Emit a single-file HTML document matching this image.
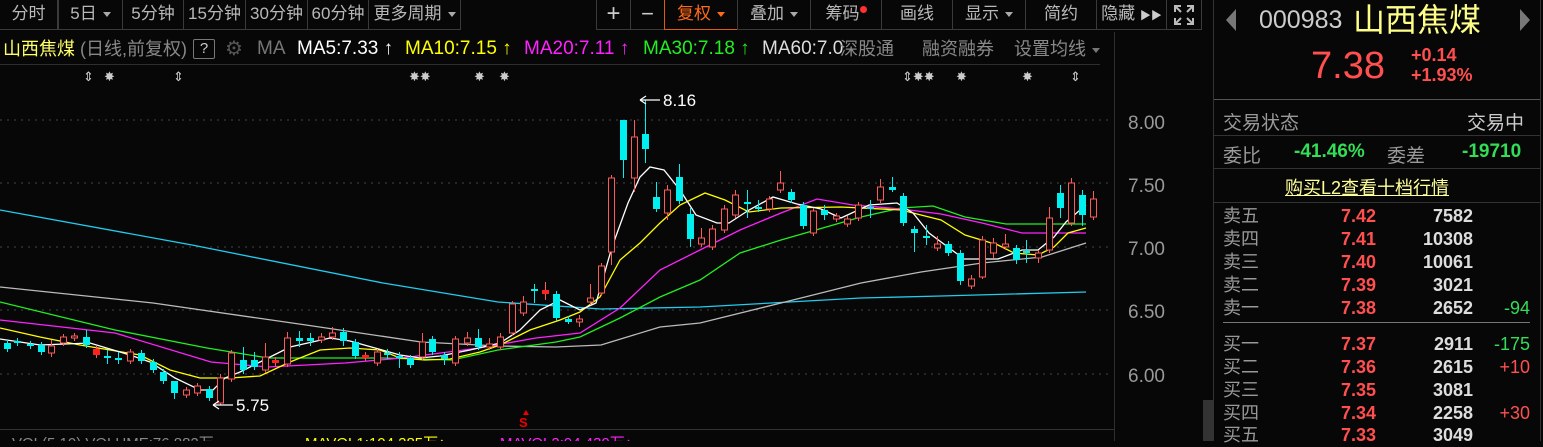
<!DOCTYPE html>
<html><head><meta charset="utf-8"><style>
*{margin:0;padding:0;box-sizing:border-box}
body{width:1543px;height:441px;background:#070707;overflow:hidden;position:relative;font-family:"Liberation Sans","Noto Sans CJK SC",sans-serif;color:#bbb}
.a{position:absolute;white-space:nowrap}
.btn{position:absolute;top:0;height:30px;border:1px solid #3a3a3a;border-top:none;font-size:17px;line-height:28px;text-align:center;color:#b8b8b8}
.car{display:inline-block;width:0;height:0;border-left:4px solid transparent;border-right:4px solid transparent;border-top:5px solid #aaa;vertical-align:middle;margin-left:6px}
.r{color:#ff4f4f}.g{color:#33dd55}
.row{position:absolute;left:1223px;width:307px;height:23px;font-size:18px;line-height:23px}
.row span{position:absolute;top:0}
.m{position:absolute;top:38px;font-size:18px;line-height:22px;white-space:nowrap}
</style></head><body>
<!-- toolbar -->
<div class="btn" style="left:-1px;width:59px">分时</div>
<div class="btn" style="left:58px;width:65px">5日<span class="car"></span></div>
<div class="btn" style="left:122px;width:62px">5分钟</div>
<div class="btn" style="left:183px;width:63px">15分钟</div>
<div class="btn" style="left:245px;width:63px">30分钟</div>
<div class="btn" style="left:307px;width:62px">60分钟</div>
<div class="btn" style="left:368px;width:93px">更多周期<span class="car"></span></div>
<div class="btn" style="left:596px;width:35px;font-size:24px;color:#ccc">+</div>
<div class="btn" style="left:630px;width:35px;font-size:22px;color:#ccc">−</div>
<div class="btn" style="left:664px;width:74px;border:1px solid #e05a10;border-top:none;color:#ff6a1a">复权<span class="car" style="border-top-color:#ff6a1a"></span></div>
<div class="btn" style="left:737px;width:74px">叠加<span class="car"></span></div>
<div class="btn" style="left:810px;width:72px">筹码<span style="display:inline-block;width:7px;height:7px;border-radius:50%;background:#ff3030;vertical-align:top;margin-top:6px"></span></div>
<div class="btn" style="left:881px;width:72px">画线</div>
<div class="btn" style="left:952px;width:74px">显示<span class="car"></span></div>
<div class="btn" style="left:1025px;width:72px">简约</div>
<div class="btn" style="left:1096px;width:71px">隐藏 <span style="font-size:11px;color:#ccc">▶▶</span></div>
<div class="btn" style="left:1166px;width:36px"><svg width="22" height="22" viewBox="0 0 22 22" style="margin-top:4px" stroke="#bbb" stroke-width="2" fill="none"><path d="M2 8V2h6M14 2h6v6M20 14v6h-6M8 20H2v-6M2 2l6 6M20 2l-6 6M20 20l-6-6M2 20l6-6"/></svg></div>
<!-- MA row -->
<span class="m" style="left:3px;color:#ffff66">山西焦煤</span>
<span class="m" style="left:80px;color:#888">(日线,前复权)</span>
<span class="m" style="left:193px;top:39px;width:22px;height:20px;border:1px solid #777;border-radius:2px;text-align:center;line-height:18px;color:#ccc;font-size:15px">?</span>
<span class="m" style="left:225px;color:#555;font-size:20px">⚙</span>
<span class="m" style="left:257px;color:#777;font-size:19px">MA</span>
<span class="m" style="left:297px;color:#fff;font-size:19px">MA5:7.33 ↑</span>
<span class="m" style="left:405px;color:#ffff00;font-size:19px">MA10:7.15 ↑</span>
<span class="m" style="left:524px;color:#ff22ff;font-size:19px">MA20:7.11 ↑</span>
<span class="m" style="left:643px;color:#22ee22;font-size:19px">MA30:7.18 ↑</span>
<span class="m" style="left:762px;color:#ddd;font-size:19px">MA60:7.0</span>
<span class="m" style="left:840px;color:#888">深股通</span>
<span class="m" style="left:922px;color:#888">融资融券</span>
<span class="m" style="left:1014px;color:#888">设置均线<span class="car" style="border-top-color:#777"></span></span>
<div class="a" style="left:0;top:64px;width:1100px;height:1px;background:#2e2e2e"></div>
<div class="a" style="left:1114px;top:32px;width:1px;height:409px;background:#2e2e2e"></div>
<div class="a" style="left:0;top:429px;width:1114px;height:1px;background:#333"></div>
<div class="a" style="left:1203px;top:400px;width:10px;height:41px;background:#333"></div>
<!-- markers -->
<div class="a" style="top:69px;left:0;font-size:13px;color:#ccc;width:1110px;height:16px">
<span class="a" style="left:83px">⇕</span><span class="a" style="left:104px">✸</span><span class="a" style="left:173px">⇕</span>
<span class="a" style="left:409px">✸✸</span><span class="a" style="left:474px">✸</span><span class="a" style="left:499px">✸</span>
<span class="a" style="left:902px">⇕✸✸</span><span class="a" style="left:956px">✸</span><span class="a" style="left:1022px">✸</span><span class="a" style="left:1070px">⇕</span>
</div>
<!-- price axis -->
<div class="a" style="left:1128px;top:113px;font-size:19px;color:#999;line-height:22px">8.00</div>
<div class="a" style="left:1128px;top:176px;font-size:19px;color:#999;line-height:22px">7.50</div>
<div class="a" style="left:1128px;top:239px;font-size:19px;color:#999;line-height:22px">7.00</div>
<div class="a" style="left:1128px;top:302px;font-size:19px;color:#999;line-height:22px">6.50</div>
<div class="a" style="left:1128px;top:366px;font-size:19px;color:#999;line-height:22px">6.00</div>
<svg class="a" style="left:0;top:0" width="1115" height="441" id="ch">
<g stroke="#444" stroke-dasharray="2,5" stroke-width="1">
<line x1="0" y1="120" x2="1112" y2="120"/><line x1="0" y1="183" x2="1112" y2="183"/><line x1="0" y1="247" x2="1112" y2="247"/><line x1="0" y1="310" x2="1112" y2="310"/><line x1="0" y1="374" x2="1112" y2="374"/></g>
<g fill="none" stroke-width="1.3">
<polyline stroke="#22ccee" points="0,210 192,245 383,283 498,302 601,309 700,307 861,298 941,296 1086,292"/>
<polyline stroke="#bbb" points="0,287 153,303 306,325 421,342 498,346 556,347 601,345 660,327 700,323 781,303 861,283 921,272 982,263 1042,257 1086,243"/>
<polyline stroke="#22ee22" points="0,302 115,330 207,348 268,358 383,358 452,360 498,350 556,342 580,337 620,318 660,297 700,280 740,253 781,240 861,217 901,208 933,206 965,217 1006,224 1062,224 1086,224"/>
<polyline stroke="#ff22ff" points="0,320 115,333 211,362 268,367 345,363 402,358 479,348 536,338 580,333 620,308 660,270 700,250 740,230 781,213 817,199 853,205 901,209 941,214 982,223 1022,233 1086,233"/>
<polyline stroke="#ffff00" points="0,328 40,337 80,345 110,350 140,355 170,370 200,378 230,378 260,376 290,362 320,350 350,348 380,350 400,358 425,360 450,359 480,352 500,345 530,330 560,320 580,312 600,297 620,260 640,243 660,223 680,205 705,193 725,200 749,212 781,208 841,207 901,210 941,220 965,235 998,245 1014,253 1038,255 1054,247 1068,233 1086,228"/>
<polyline stroke="#fff" points="0,339 40,345 90,343 130,355 150,362 175,378 200,390 213,390 225,378 240,372 260,362 290,347 330,338 350,341 375,348 400,355 420,358 440,356 470,350 500,343 520,330 540,310 560,300 580,310 596,303 612,247 628,203 640,177 650,167 664,170 680,190 696,215 717,223 729,223 749,210 773,197 797,204 821,209 841,218 869,205 897,203 913,213 929,233 964,259 998,259 1022,250 1038,250 1054,237 1066,222 1086,205"/>
</g>
<g id="cd"></g>
<g fill="#fff" stroke="#fff" stroke-width="1.2"><path d="M640 100H660M640 100l6-4M640 100l6 4M213 405h20M213 405l6-4M213 405l6 4" fill="none"/></g>
<text x="663" y="106" fill="#fff" font-size="17" font-family="Liberation Sans">8.16</text>
<text x="236" y="411" fill="#fff" font-size="17" font-family="Liberation Sans">5.75</text>
<path d="M523 415l3-5 3 5z" fill="#e00"/>
<text x="519" y="427" fill="#e00" font-size="13" font-weight="bold" font-family="Liberation Sans">S</text>
<text x="12" y="448" fill="#888" font-size="15" font-family="Liberation Sans">VOL(5,10) VOLUME:76,882万</text>
<text x="305" y="448" fill="#ffff00" font-size="15" font-family="Liberation Sans">MAVOL1:104,285万↑</text>
<text x="500" y="448" fill="#ff22ff" font-size="15" font-family="Liberation Sans">MAVOL2:94,439万↑</text>
</svg>
<script>
var C=[[0,343,349,'c'],[10,341,343,'c'],[23,344,346,'c'],[34,345,352,'c'],[44,346,353,'r',340,357],[56,337,343,'r'],[67,336,338,'r'],[79,337,345,'c',330],[89,349,355,'R'],[100,356,358,'c',350,364],[111,358,360,'c',352,364],[123,352,361,'r'],[134,353,361,'c'],[146,362,370,'c'],[156,372,381,'c'],[167,381,393,'c',381,399],[179,390,395,'r'],[190,386,393,'r'],[202,389,398,'c'],[213,378,403,'r',374,405],[224,353,379,'r'],[236,360,370,'c',347,374],[247,360,367,'c',352],[258,357,370,'r',343],[268,360,363,'R'],[280,338,364,'r',332],[292,338,341,'c',331,347],[303,338,341,'c',333,346],[314,337,340,'r',333],[325,333,337,'r',327],[336,332,341,'c',328,346],[348,342,356,'c'],[358,355,358,'R'],[370,352,363,'r'],[380,353,355,'c',349,359],[392,356,358,'c',352,368],[403,358,365,'c'],[415,342,357,'r',333],[425,339,352,'c'],[437,355,359,'c',352,365],[448,339,363,'r'],[460,338,343,'r',332],[471,338,347,'c',329],[482,344,347,'r',338],[493,337,347,'r',333],[505,304,333,'r'],[516,302,313,'r',296],[527,289,291,'c',284,303],[538,290,294,'R',282,300],[549,294,318,'c'],[561,319,322,'c',316,324],[572,319,322,'r',315,327],[583,298,302,'r',284],[594,266,293,'r'],[604,178,252,'r',175,265],[616,120,160,'c',120,178],[627,137,178,'r',120,192],[638,134,149,'c',100,163],[649,197,209,'c',182],[660,190,213,'r',185,220],[672,177,201,'c',164],[683,214,239,'c',208,247],[694,238,244,'r',228],[705,229,247,'r',225],[717,209,230,'r',205],[728,195,215,'r',190],[740,202,204,'c',190,218],[751,207,209,'c',200,212],[762,199,209,'r'],[773,183,190,'r',171],[784,192,200,'c'],[796,205,226,'c'],[806,211,233,'r'],[817,210,215,'c',205,220],[829,216,219,'r'],[840,219,224,'r'],[851,205,218,'r'],[863,207,209,'c',200,218],[873,187,200,'r',179],[885,187,190,'c',177,192],[896,196,223,'c'],[907,229,233,'c',226,252],[919,236,238,'c',225,245],[930,244,248,'r',236],[941,244,253,'c'],[953,253,281,'c',250,285],[964,279,286,'r',275],[975,240,277,'r',236,279],[986,243,253,'r',238,258],[998,244,247,'r',234],[1009,248,260,'c',245,264],[1019,251,253,'c',240,263],[1031,253,258,'r',250,263],[1042,218,250,'r',207],[1053,193,208,'c',185,218],[1064,183,223,'r',178],[1075,195,215,'c',190,226],[1086,199,217,'r',191,220]];
var s='';C.forEach(function(c){var x=c[0]+4,t=c[1],b=c[2],ty=c[3],h=c[4]||t-3,l=c[5]||b+3;var col=ty=='c'?'#00f0f0':'#ff5a5a';
s+='<line x1="'+(x+3.5)+'" x2="'+(x+3.5)+'" y1="'+h+'" y2="'+l+'" stroke="'+col+'"/>';
var hh=Math.max(b-t,2);
if(ty=='r')s+='<rect x="'+(x+.5)+'" y="'+t+'" width="6" height="'+hh+'" fill="#070707" stroke="'+col+'"/>';
else s+='<rect x="'+x+'" y="'+t+'" width="7" height="'+hh+'" fill="'+(ty=='R'?'#ff2020':col)+'"/>';});
document.getElementById('cd').innerHTML=s;
</script>
<!-- right panel -->
<div class="a" style="left:1213px;top:0;width:1px;height:441px;background:#333"></div>
<div class="a" style="left:1540px;top:0;width:1px;height:441px;background:#333"></div>
<svg class="a" style="left:1224px;top:8px" width="14" height="24"><path d="M12 1L2 12l10 11z" fill="#777"/></svg>
<svg class="a" style="left:1518px;top:8px" width="14" height="24"><path d="M2 1l10 11L2 23z" fill="#777"/></svg>
<div class="a" style="left:1259px;top:5px;font-size:25px;line-height:30px;color:#ccc">000983</div>
<div class="a" style="left:1353px;top:1px;font-size:32px;line-height:38px;color:#ffff88">山西焦煤</div>
<div class="a r" style="left:1311px;top:44px;font-size:38px;line-height:44px">7.38</div>
<div class="a r" style="left:1411px;top:45px;font-size:18px;line-height:20px;font-weight:bold">+0.14<br>+1.93%</div>
<div class="a" style="left:1214px;top:99px;width:326px;height:1px;background:#555"></div>
<div class="a" style="left:1223px;top:108px;font-size:19px;color:#999">交易状态</div>
<div class="a" style="left:1467px;top:108px;font-size:19px;color:#ccc">交易中</div>
<div class="a" style="left:1214px;top:135px;width:326px;height:1px;background:#333"></div>
<div class="a" style="left:1223px;top:141px;font-size:19px;color:#999">委比</div>
<div class="a g" style="left:1294px;top:141px;font-size:19px;font-weight:bold">-41.46%</div>
<div class="a" style="left:1387px;top:141px;font-size:19px;color:#999">委差</div>
<div class="a g" style="left:1462px;top:141px;font-size:19px;font-weight:bold">-19710</div>
<div class="a" style="left:1214px;top:168px;width:326px;height:1px;background:#333"></div>
<div class="a" style="left:1285px;top:174px;font-size:18px;color:#ffff99;text-decoration:underline">购买L2查看十档行情</div>
<div class="a" style="left:1214px;top:202px;width:326px;height:1px;background:#333"></div>
<div class="a" style="left:1223px;top:322px;width:307px;height:1px;background:#777"></div>
<div id="ob"></div>
<script>
var R=[['卖五','7.42','7582','',205],['卖四','7.41','10308','',228],['卖三','7.40','10061','',251],['卖二','7.39','3021','',274],['卖一','7.38','2652','-94',297],['买一','7.37','2911','-175',333],['买二','7.36','2615','+10',356],['买三','7.35','3081','',379],['买四','7.34','2258','+30',402],['买五','7.33','3049','',424]];
var h='';R.forEach(function(r){var dc=r[3][0]=='-'?'#33dd55':'#ff5050';
h+='<div class="row" style="top:'+r[4]+'px"><span style="left:0;color:#999">'+r[0]+'</span><span style="right:154px;color:#ff4f4f;font-weight:bold">'+r[1]+'</span><span style="right:57px;color:#ddd;font-weight:bold">'+r[2]+'</span><span style="right:0;color:'+dc+'">'+r[3]+'</span></div>';});
document.getElementById('ob').innerHTML=h;
</script>
</body></html>
